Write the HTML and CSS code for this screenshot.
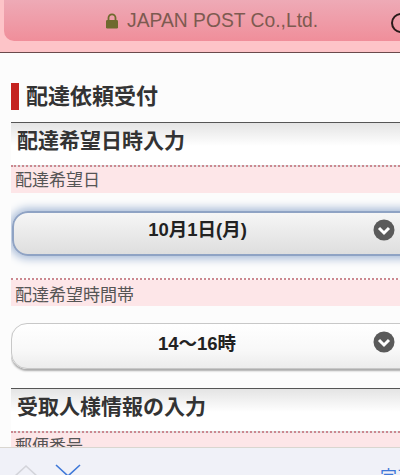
FILE: index.html
```html
<!DOCTYPE html>
<html lang="ja">
<head>
<meta charset="utf-8">
<title>配達依頼受付</title>
<link rel="stylesheet" href="styles.css">
</head>
<body>
<div class="screen">
  <header class="topbar">
    <div class="address">
      <svg class="lock" viewBox="0 0 14 16" width="14" height="16"><path d="M3.5 7V4.8a3.5 3.5 0 0 1 7 0V7" fill="none" stroke="#6f6a2e" stroke-width="1.8"/><rect x="1" y="7" width="12" height="8.5" rx="1.2" fill="#6f6a2e"/></svg>
      <span class="site">JAPAN POST Co.,Ltd.</span>
    </div>
    <span class="reload"></span>
  </header>
  <main class="page">
    <h1 class="title">配達依頼受付</h1>
    <section class="section">
      <h2 class="section-head">配達希望日時入力</h2>
      <div class="label">配達希望日</div>
      <div class="select-wrap first">
        <div class="select focused"><span class="value">10月1日(月)</span>
          <svg class="arrow" viewBox="0 0 22 22" width="22" height="22"><circle cx="11" cy="11" r="10.5" fill="#5a5a5a"/><path d="M6 9l5 5 5-5" fill="none" stroke="#fff" stroke-width="3"/></svg>
        </div>
      </div>
      <div class="label low">配達希望時間帯</div>
      <div class="select-wrap second">
        <div class="select"><span class="value">14〜16時</span>
          <svg class="arrow" viewBox="0 0 22 22" width="22" height="22"><circle cx="11" cy="11" r="10.5" fill="#5a5a5a"/><path d="M6 9l5 5 5-5" fill="none" stroke="#fff" stroke-width="3"/></svg>
        </div>
      </div>
    </section>
    <section class="section">
      <h2 class="section-head">受取人様情報の入力</h2>
      <div class="label">郵便番号</div>
    </section>
  </main>
  <footer class="toolbar">
    <svg class="chev" viewBox="0 0 26 14" width="26" height="14"><path d="M1 13L13 2l12 11" fill="none" stroke="#d3d4da" stroke-width="1.6"/></svg>
    <svg class="chev" viewBox="0 0 26 14" width="26" height="14"><path d="M1 1l12 11L25 1" fill="none" stroke="#3f78d8" stroke-width="1.6"/></svg>
    <span class="done">完了</span>
  </footer>
</div>
</body>
</html>
```
FILE: styles.css
```css
* { box-sizing: border-box; }
html, body { margin: 0; padding: 0; }
body { width: 400px; height: 475px; overflow: hidden; background: #fcfcfc; font-family: "Liberation Sans", "Noto Sans CJK JP", sans-serif; color: #333; }
.screen { position: relative; width: 400px; height: 475px; overflow: hidden; display: flex; flex-direction: column; }
.topbar { height: 53px; flex: none; background: #fdc4c8; border-bottom: 1px solid #6b4a4c; padding: 0 0 12px 4px; display: flex; }
.address { width: 420px; flex: none; height: 41px; border-radius: 0 0 10px 10px; background: linear-gradient(#eeaab6, #f08e9a); display: flex; align-items: center; padding-left: 101px; gap: 8px; font-size: 19.3px; color: #7d5a50; }
.lock { flex: none; }
.reload { position: absolute; left: 391px; top: 13px; width: 20px; height: 20px; border: 2px solid #2a1a1a; border-radius: 50%; }
.page { flex: 1; min-height: 0; overflow: hidden; padding-top: 30px; }
.title { margin: 0 0 12px 11px; height: 27px; border-left: 8px solid #c4221f; padding-left: 7px; font-size: 22px; line-height: 27px; font-weight: bold; color: #333; }
.section-head { margin: 0 0 0 11px; height: 45px; border-top: 1px solid #555; border-bottom: 2px dotted #cc8890; background: linear-gradient(#e4e4e4, #fff 55%, #fff); padding-left: 6px; font-size: 21px; line-height: 36px; font-weight: bold; color: #333; }
.label { height: 26px; margin-left: 11px; padding-left: 4px; background: #fde6e8; font-size: 17px; line-height: 28px; color: #555; overflow: hidden; }
.label.low { line-height: 31px; }
.select-wrap { overflow: hidden; margin-left: 11px; margin-right: -30px; }
.select-wrap.first { padding: 18px 0 24px 1px; height: 87px; border-bottom: 2px dotted #cc8890; }
.select-wrap.second { padding: 17px 0 17px 0; height: 82px; }
.select { position: relative; height: 46px; border: 1px solid #c8c8c8; border-radius: 16px; background: linear-gradient(#fff, #f8f8f8 60%, #ececec); box-shadow: 0 2px 2px #aaa; display: flex; align-items: center; justify-content: center; padding: 0 47px 9px 0; font-size: 18.5px; font-weight: bold; color: #222; }
.select.focused { height: 45px; padding-bottom: 12px; background: linear-gradient(#f6f6f6, #dedede); border: 2px solid #8fa3c4; box-shadow: 0 0 8px 3px #a9bcd8; }
.arrow { position: absolute; left: 361px; top: 50%; margin-top: -15px; }
.focused .arrow { left: 359px; }
.toolbar { height: 28px; flex: none; background: #f0f1f8; border-top: 1px solid #d9d6d0; position: relative; display: flex; gap: 16px; padding: 16px 0 0 13px; align-items: flex-start; overflow: hidden; }
.done { position: absolute; left: 380px; top: 15px; font-size: 17px; color: #3f78d8; white-space: nowrap; }
```
